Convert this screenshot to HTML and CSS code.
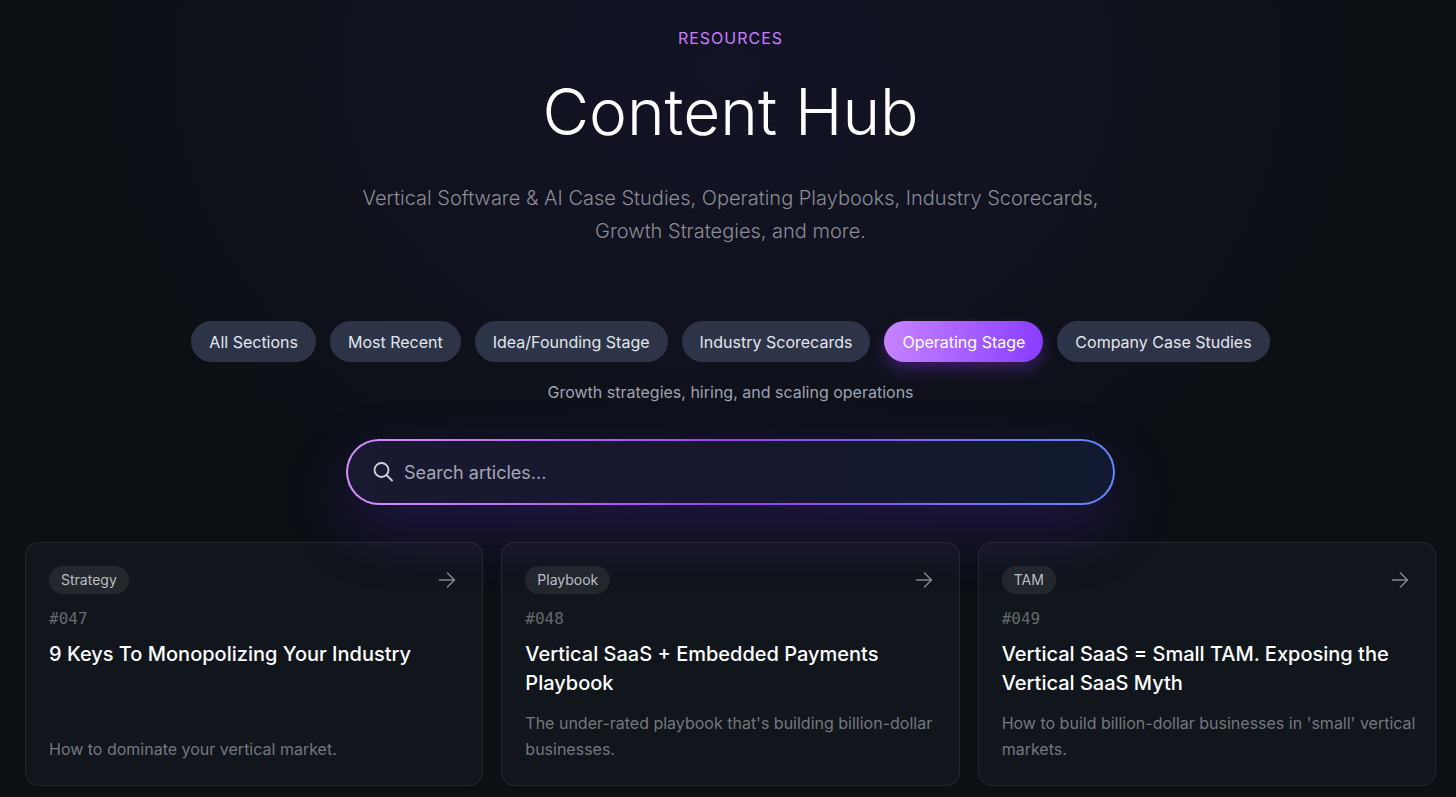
FILE: index.html
```html
<!DOCTYPE html>
<html lang="en">

<head>
  <meta charset="UTF-8">
  <meta name="viewport" content="width=device-width, initial-scale=1.0">
  <title>Content Hub</title>
  <link rel="stylesheet" href="styles.css">
</head>

<body>
  <header class="hero">
    <p class="eyebrow">RESOURCES</p>
    <h1>Content Hub</h1>
    <p class="lead">Vertical Software &amp; AI Case Studies, Operating Playbooks, Industry Scorecards,<br>Growth Strategies, and more.</p>
  </header>

  <nav class="filters">
    <button type="button">All Sections</button>
    <button type="button">Most Recent</button>
    <button type="button">Idea/Founding Stage</button>
    <button type="button">Industry Scorecards</button>
    <button type="button" class="active">Operating Stage</button>
    <button type="button">Company Case Studies</button>
  </nav>
  <p class="filter-desc">Growth strategies, hiring, and scaling operations</p>

  <label class="search">
    <svg class="search-icon" viewBox="0 0 20 20" aria-hidden="true">
      <circle cx="8.5" cy="8" r="7" />
      <path d="M13.5 13l5.500 5.500" />
    </svg>
    <input type="text" placeholder="Search articles..." aria-label="Search articles">
  </label>

  <main class="cards">
    <a class="card" href="#047">
      <div class="card-top">
        <span class="tag">Strategy</span>
        <svg class="arrow" viewBox="0 0 18 18" aria-hidden="true"><path d="M1.5 9h15M9.5 2l7 7-7 7" /></svg>
      </div>
      <span class="num">#047</span>
      <h2>9 Keys To Monopolizing Your Industry</h2>
      <p>How to dominate your vertical market.</p>
    </a>
    <a class="card" href="#048">
      <div class="card-top">
        <span class="tag">Playbook</span>
        <svg class="arrow" viewBox="0 0 18 18" aria-hidden="true"><path d="M1.5 9h15M9.5 2l7 7-7 7" /></svg>
      </div>
      <span class="num">#048</span>
      <h2>Vertical SaaS + Embedded Payments Playbook</h2>
      <p>The under-rated playbook that's building billion-dollar businesses.</p>
    </a>
    <a class="card" href="#049">
      <div class="card-top">
        <span class="tag">TAM</span>
        <svg class="arrow" viewBox="0 0 18 18" aria-hidden="true"><path d="M1.5 9h15M9.5 2l7 7-7 7" /></svg>
      </div>
      <span class="num">#049</span>
      <h2>Vertical SaaS = Small TAM. Exposing the Vertical SaaS Myth</h2>
      <p>How to build billion-dollar businesses in 'small' vertical markets.</p>
    </a>
  </main>
</body>

</html>
```
FILE: styles.css
```css
* {
  box-sizing: border-box;
}

body {
  margin: 0;
  padding: 24px 20px 12px 25px;
  background: radial-gradient(ellipse 640px 500px at 50% 70px, #121425 0%, #10121e 50%, #0c1015 100%) #0c1015;
  color: #fff;
  font-family: Inter, "Liberation Sans", sans-serif;
}

h1,
h2,
p {
  margin: 0;
}

.hero {
  text-align: center;
}

.eyebrow {
  color: #c77dff;
  font-size: 16px;
  line-height: 28px;
  letter-spacing: 1px;
}

h1 {
  margin-top: 20px;
  font-size: 64px;
  font-weight: 300;
  line-height: 80px;
}

.lead {
  margin-top: 30px;
  color: #8b8c94;
  font-size: 20px;
  font-weight: 300;
  line-height: 33px;
}

.filters {
  display: flex;
  flex-wrap: wrap;
  justify-content: center;
  gap: 14px;
  margin-top: 73px;
}

.filters button {
  height: 41px;
  padding: 0 17px;
  border: 1px solid #30374b;
  border-radius: 21px;
  background: #2d3448;
  color: #e2e6ee;
  font-family: inherit;
  font-size: 16px;
  font-weight: 400;
}

.filters .active {
  border-color: transparent;
  background: linear-gradient(100deg, #c785ff, #873bff) border-box;
  color: #fff;
  box-shadow: 0 8px 16px rgba(150, 60, 255, 0.3);
}

.filter-desc {
  margin-top: 18px;
  color: #9da3b1;
  font-size: 16px;
  line-height: 24px;
  text-align: center;
}

.search {
  display: flex;
  align-items: center;
  gap: 11px;
  max-width: 769px;
  height: 66px;
  margin: 35px auto 0;
  padding: 0 25px;
  border: 2px solid transparent;
  border-radius: 33px;
  background:
    linear-gradient(90deg, #191a31, #16172e 50%, #111a30) padding-box,
    linear-gradient(90deg, #d990ff, #9642f0 50%, #6287ff) border-box;
  box-shadow: 0 24px 60px rgba(90, 35, 210, 0.25);
}

.search-icon {
  width: 20px;
  height: 20px;
  fill: none;
  stroke: #d2d3d9;
  stroke-width: 1.8;
  stroke-linecap: round;
}

.search input {
  flex: 1;
  min-width: 0;
  padding: 0;
  border: 0;
  outline: 0;
  background: none;
  color: #fff;
  font-family: inherit;
  font-size: 18px;
}

.search input::placeholder {
  color: #a5a6b1;
  opacity: 1;
}

.cards {
  display: grid;
  grid-template-columns: repeat(3, 1fr);
  gap: 18px;
  margin-top: 37px;
}

.card {
  display: flex;
  flex-direction: column;
  min-height: 244px;
  padding: 23px 18px 23px 23px;
  border: 1px solid rgba(255, 255, 255, 0.08);
  border-radius: 14px;
  /* translucent so the search glow shows through */
  background: rgba(170, 210, 220, 0.03);
  color: #fff;
  text-decoration: none;
}

.card-top {
  display: flex;
  align-items: center;
  justify-content: space-between;
}

.tag {
  padding: 0 12px;
  border-radius: 14px;
  background: rgba(255, 255, 255, 0.08);
  color: #bcbdc2;
  font-size: 14px;
  line-height: 28px;
}

.arrow {
  width: 18px;
  height: 18px;
  margin-right: 8px;
  fill: none;
  stroke: #84868b;
  stroke-width: 1.5;
  stroke-linecap: round;
  stroke-linejoin: round;
}

.num {
  margin-top: 13px;
  color: #65696e;
  font-family: "DejaVu Sans Mono", "Liberation Mono", monospace;
  font-size: 16px;
  line-height: 24px;
}

.card h2 {
  margin-top: 9px;
  font-size: 20px;
  font-weight: 500;
  line-height: 29px;
}

.card p {
  margin-top: auto;
  color: #74787d;
  font-size: 16px;
  line-height: 26px;
}
```
